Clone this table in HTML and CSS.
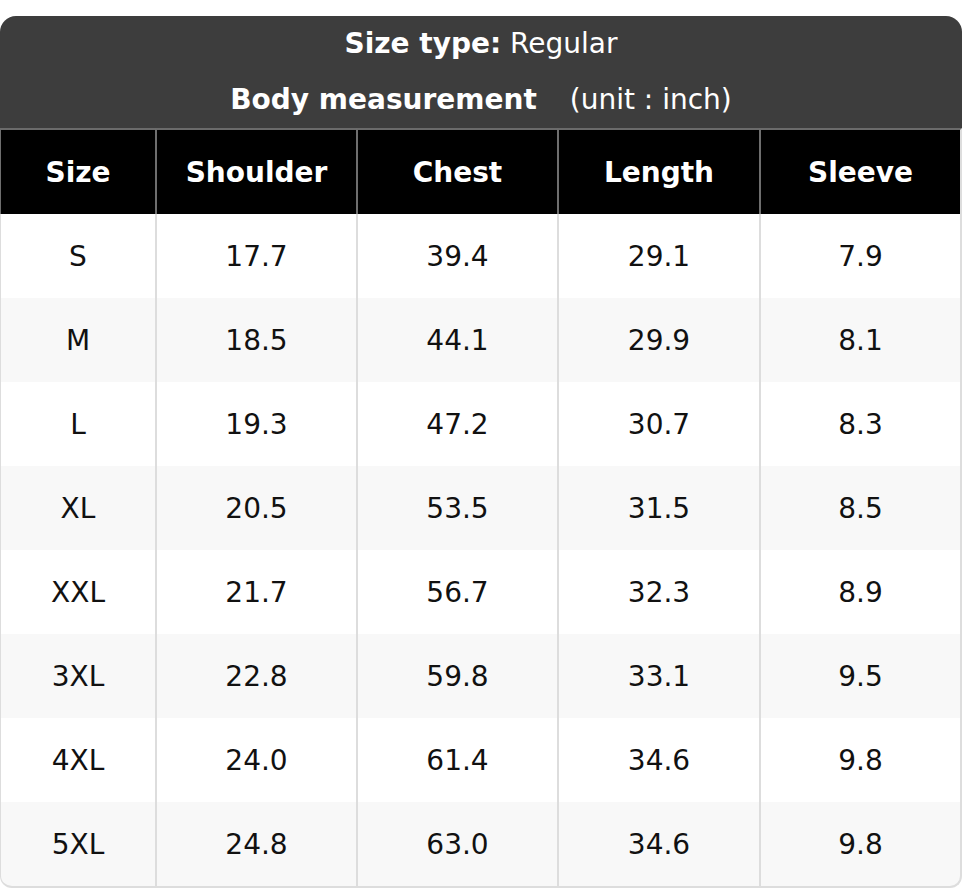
FILE: index.html
```html
<!DOCTYPE html>
<html lang="en">
<head>
<meta charset="utf-8">
<title>Size chart</title>
<link rel="stylesheet" href="styles.css">
</head>
<body>
<div class="chart">
  <div class="title">
    <div class="title-line"><b>Size type:</b> Regular</div>
    <div class="title-line"><b>Body measurement</b><span class="unit">(unit : inch)</span></div>
  </div>
  <table class="sizes">
    <colgroup>
      <col class="c-size">
      <col class="c-std">
      <col class="c-std">
      <col class="c-wide">
      <col class="c-last">
    </colgroup>
    <thead>
      <tr><th>Size</th><th>Shoulder</th><th>Chest</th><th>Length</th><th>Sleeve</th></tr>
    </thead>
    <tbody>
      <tr><td>S</td><td>17.7</td><td>39.4</td><td>29.1</td><td>7.9</td></tr>
      <tr><td>M</td><td>18.5</td><td>44.1</td><td>29.9</td><td>8.1</td></tr>
      <tr><td>L</td><td>19.3</td><td>47.2</td><td>30.7</td><td>8.3</td></tr>
      <tr><td>XL</td><td>20.5</td><td>53.5</td><td>31.5</td><td>8.5</td></tr>
      <tr><td>XXL</td><td>21.7</td><td>56.7</td><td>32.3</td><td>8.9</td></tr>
      <tr><td>3XL</td><td>22.8</td><td>59.8</td><td>33.1</td><td>9.5</td></tr>
      <tr><td>4XL</td><td>24.0</td><td>61.4</td><td>34.6</td><td>9.8</td></tr>
      <tr><td>5XL</td><td>24.8</td><td>63.0</td><td>34.6</td><td>9.8</td></tr>
    </tbody>
  </table>
</div>
</body>
</html>
```
FILE: styles.css
```css
html, body {
  margin: 0;
  padding: 0;
  background: #ffffff;
}
body {
  padding-top: 16px;
  font-family: "DejaVu Sans", "Liberation Sans", sans-serif;
  font-size: 28px;
}
.chart {
  width: 962px;
}
.title {
  background: #3d3d3d;
  color: #ffffff;
  border-radius: 16px 16px 0 0;
  text-align: center;
  height: 112px;
}
.title-line {
  height: 56px;
  line-height: 56px;
}
.title b {
  font-weight: bold;
}
.unit {
  margin-left: 33px;
}
.sizes {
  width: 962px;
  table-layout: fixed;
  border-collapse: separate;
  border-spacing: 0;
}
.c-size { width: 155px; }
.c-std { width: 201px; }
.c-wide { width: 202px; }
.c-last { width: 203px; }
.sizes th,
.sizes td {
  box-sizing: border-box;
  padding: 0;
  text-align: center;
  vertical-align: middle;
  border-left: 2px solid #dddddd;
}
.sizes th:first-child,
.sizes td:first-child {
  border-left-width: 1px;
}
.sizes th:last-child,
.sizes td:last-child {
  border-right: 2px solid #dddddd;
}
.sizes th {
  height: 86px;
  background: #000000;
  color: #ffffff;
  font-weight: bold;
  border-top: 2px solid #6b6b6b;
  border-left-color: #6e6e6e;
  border-right-color: #6e6e6e;
}
.sizes td {
  height: 84px;
  color: #111111;
  background: #ffffff;
}
.sizes tbody tr:nth-child(even) td {
  background: #f8f8f8;
}
.sizes tbody tr:last-child td {
  height: 86px;
  border-bottom: 2px solid #dddddd;
}
.sizes tbody tr:last-child td:first-child {
  border-bottom-left-radius: 12px;
}
.sizes tbody tr:last-child td:last-child {
  border-bottom-right-radius: 12px;
}
```
